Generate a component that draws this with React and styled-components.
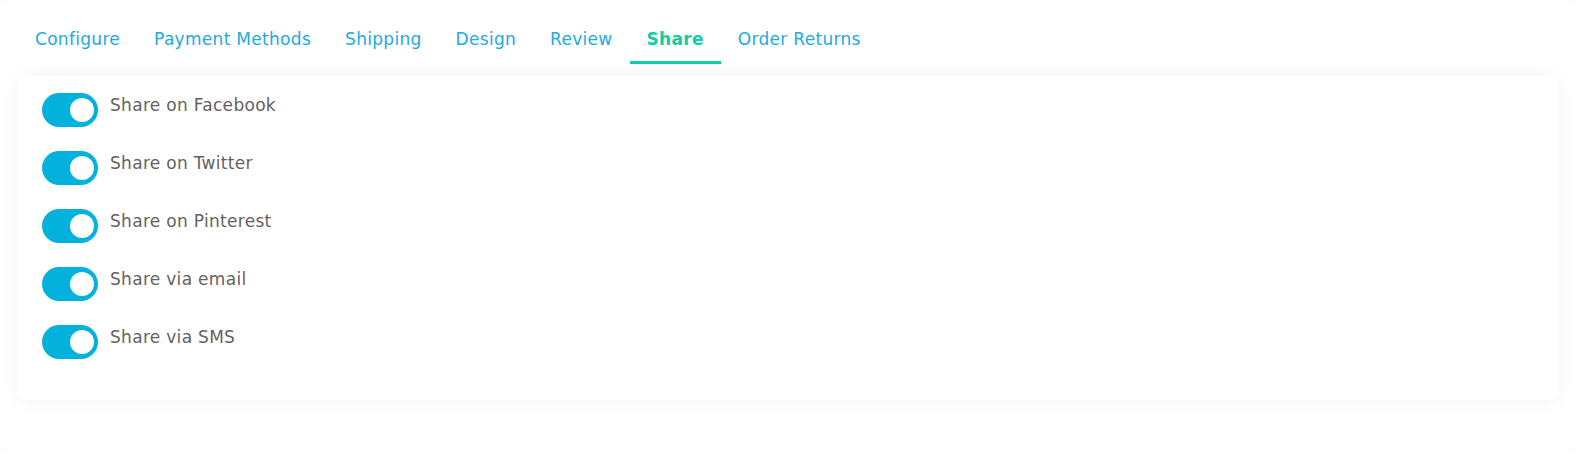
import React, { useState } from "react";
import styled, { createGlobalStyle } from "styled-components";

const GlobalStyle = createGlobalStyle`
  html, body {
    margin: 0;
    padding: 0;
    background: #ffffff;
  }
  body {
    font-family: "DejaVu Sans", "Noto Sans", sans-serif;
  }
  * { box-sizing: border-box; }
`;

const Page = styled.div`
  height: 452px;
  background: #ffffff;
  border-radius: 10px;
  box-shadow: 0 0 8px rgba(0, 0, 0, 0.04);
  padding: 18px 18px 0;
`;

const TabBar = styled.nav`
  display: flex;
  align-items: flex-end;
  margin-bottom: 12px;
`;

const Tab = styled.button`
  appearance: none;
  background: none;
  border: none;
  border-bottom: 3px solid ${(p) => (p.$active ? "#0ccfa5" : "transparent")};
  padding: 9px 17px 10px;
  margin: 0;
  font-family: inherit;
  font-size: 17px;
  letter-spacing: 0.3px;
  line-height: 24px;
  font-weight: ${(p) => (p.$active ? 700 : 400)};
  color: ${(p) => (p.$active ? "#10cea0" : "#22aae2")};
  cursor: pointer;
  white-space: nowrap;
`;

const Card = styled.section`
  background: #ffffff;
  border-radius: 8px;
  box-shadow: 0 0 20px rgba(0, 0, 0, 0.055);
  padding: 17px 24px 17px;
  min-height: 322px;
`;

const Row = styled.div`
  display: flex;
  align-items: flex-start;
  gap: 12px;
  margin-bottom: 24px;
`;

const Track = styled.span`
  position: relative;
  flex: 0 0 auto;
  width: 56px;
  height: 34px;
  border-radius: 17px;
  background: ${(p) => (p.$on ? "#03b2dc" : "#cfd4d8")};
  cursor: pointer;
  transition: background 0.2s;
`;

const Knob = styled.span`
  position: absolute;
  top: 5px;
  left: ${(p) => (p.$on ? "28px" : "4px")};
  width: 24px;
  height: 24px;
  border-radius: 50%;
  background: #ffffff;
  transition: left 0.2s;
`;

const Label = styled.span`
  font-size: 17px;
  letter-spacing: 0.3px;
  line-height: 24px;
  color: #675f5f;
`;

const tabs = [
  "Configure",
  "Payment Methods",
  "Shipping",
  "Design",
  "Review",
  "Share",
  "Order Returns",
];

const options = [
  "Share on Facebook",
  "Share on Twitter",
  "Share on Pinterest",
  "Share via email",
  "Share via SMS",
];

function Toggle({ on, onClick }) {
  return (
    <Track $on={on} onClick={onClick} role="switch" aria-checked={on}>
      <Knob $on={on} />
    </Track>
  );
}

export default function App() {
  const [active, setActive] = useState("Share");
  const [state, setState] = useState(options.map(() => true));
  return (
    <>
      <GlobalStyle />
      <Page>
        <TabBar>
          {tabs.map((t) => (
            <Tab key={t} $active={t === active} onClick={() => setActive(t)}>
              {t}
            </Tab>
          ))}
        </TabBar>
        <Card>
          {options.map((o, i) => (
            <Row key={o}>
              <Toggle
                on={state[i]}
                onClick={() =>
                  setState((s) => s.map((v, j) => (j === i ? !v : v)))
                }
              />
              <Label>{o}</Label>
            </Row>
          ))}
        </Card>
      </Page>
    </>
  );
}
